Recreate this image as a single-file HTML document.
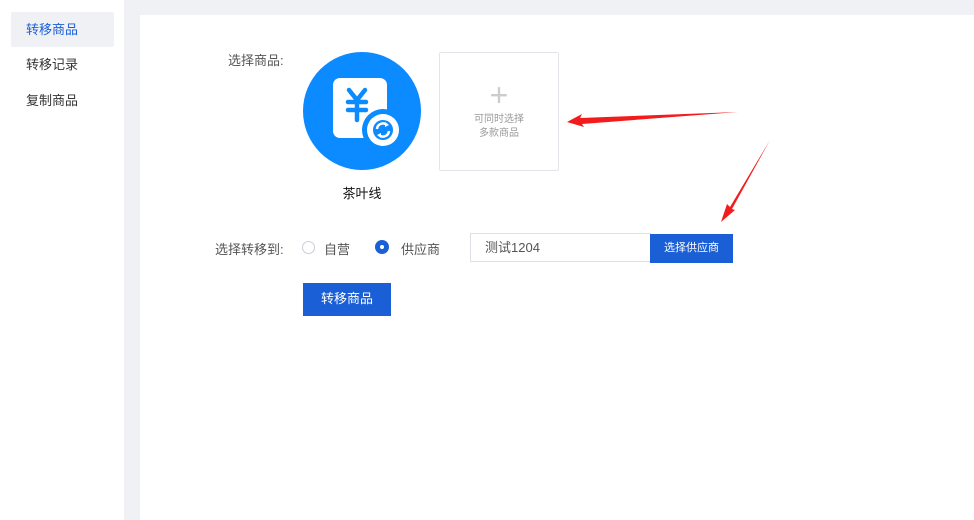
<!DOCTYPE html>
<html><head><meta charset="utf-8"><style>
*{margin:0;padding:0;box-sizing:border-box}
body{width:974px;height:520px;background:#f0f1f5;font-family:"Liberation Sans","Noto Sans CJK SC",sans-serif;position:relative;overflow:hidden;font-size:13px;color:#333}
.side{position:absolute;left:0;top:0;width:124px;height:520px;background:#fff}
.nav{position:absolute;left:11px;width:103px;height:35px;line-height:35px;padding-left:15px;font-size:13px;color:#333}
.act{background:#f0f1f4;color:#1a5fd6;border-radius:2px}
.main{position:absolute;left:140px;top:15px;width:834px;height:505px;background:#fff}
.abs{position:absolute}
</style></head><body>
<div class="side">
<div class="nav act" style="top:12px">转移商品</div>
<div class="nav" style="top:47px">转移记录</div>
<div class="nav" style="top:83px">复制商品</div>
</div>
<div class="main"></div>
<div class="abs" style="left:228px;top:50px;color:#555">选择商品:</div>
<svg class="abs" style="left:303px;top:52px" width="118" height="118" viewBox="0 0 118 118">
<circle cx="59" cy="59" r="59" fill="#0b8bff"/>
<rect x="30" y="26" width="54" height="60" rx="7" fill="#fff"/>
<path d="M46 38l8 10 8-10M54 48v20M45 50h18M45 58h18" stroke="#0b8bff" stroke-width="4.5" fill="none" stroke-linecap="round"/>
<circle cx="80" cy="78" r="21" fill="#0b8bff"/>
<circle cx="80" cy="78" r="16" fill="#fff"/>
<circle cx="80" cy="78" r="10" fill="#0b8bff"/>
<path d="M74 77a6 6 0 0 1 10-4M86 79a6 6 0 0 1-10 4" stroke="#fff" stroke-width="2.5" fill="none"/>
<path d="M82 70l4 3-4 2zM78 86l-4-3 4-2z" fill="#fff"/>
</svg>
<div class="abs" style="left:303px;top:183px;width:118px;text-align:center;color:#111">茶叶线</div>
<div class="abs" style="left:439px;top:52px;width:120px;height:119px;border:1px solid #e3e4ea;border-radius:2px;text-align:center;color:#999;font-size:10px;line-height:14px">
<div style="font-size:32px;color:#ccc;line-height:32px;margin-top:26px;font-weight:200">+</div>
<div style="margin-top:2px">可同时选择<br>多款商品</div></div>
<div class="abs" style="left:215px;top:239px;color:#555">选择转移到:</div>
<div class="abs" style="left:302px;top:241px;width:13px;height:13px;border:1px solid #ccd;border-radius:50%"></div>
<div class="abs" style="left:324px;top:239px;color:#555">自营</div>
<div class="abs" style="left:375px;top:240px;width:14px;height:14px;background:#1a5fd6;border-radius:50%"><div style="width:4px;height:4px;background:#fff;border-radius:50%;margin:5px"></div></div>
<div class="abs" style="left:401px;top:239px;color:#555">供应商</div>
<div class="abs" style="left:470px;top:233px;width:181px;height:29px;border:1px solid #dcdfe6;padding-left:14px;line-height:27px;color:#555">测试1204</div>
<div class="abs" style="left:650px;top:234px;width:83px;height:29px;background:#1a5fd6;color:#fff;font-size:11px;line-height:29px;text-align:center">选择供应商</div>
<div class="abs" style="left:303px;top:283px;width:88px;height:33px;background:#1a5fd6;color:#fff;line-height:32px;text-align:center">转移商品</div>
<svg class="abs" style="left:0;top:0" width="974" height="520">
<polygon points="738,112 580,118 582,114 567,122 584,127 582,124" fill="#f21c1c"/>
<polygon points="770,140 730,207 727,204 721,222 735,210 732,209" fill="#f21c1c"/>
</svg>
</body></html>
